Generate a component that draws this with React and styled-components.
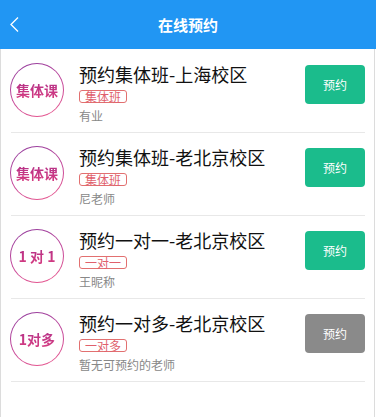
import React from "react";
import styled, { createGlobalStyle } from "styled-components";

const Global = createGlobalStyle`
  html, body { margin: 0; padding: 0; background: #fff; }
  body { font-family: "Noto Sans CJK SC", "Noto Sans", sans-serif; }
`;

const Page = styled.div`
  width: 376px;
  min-height: 417px;
  display: flex;
  flex-direction: column;
`;

const Header = styled.header`
  height: 49px;
  background: #2196f3;
  display: grid;
  grid-template-columns: 40px 1fr 40px;
  align-items: center;
`;

const Back = styled.button`
  border: 0;
  background: none;
  padding: 0 0 0 10px;
  height: 49px;
  display: flex;
  align-items: center;
`;

const Title = styled.h1`
  margin: 0;
  text-align: center;
  color: #fff;
  font-size: 15px;
  font-weight: 700;
  line-height: 20px;
`;

const List = styled.main`
  flex: 1;
  padding-top: 1px;
  border-left: 1px solid #dcdcdc;
  border-right: 1px solid #dcdcdc;
  margin-right: 1px;
  padding-right: 9px;
  padding-left: 10px;
`;

const Row = styled.div`
  height: 83px;
  box-sizing: border-box;
  border-bottom: 1px solid #e8e8e8;
  display: grid;
  grid-template-columns: 54px 1fr 60px;
  column-gap: 14px;
  align-items: start;
  padding-top: 13px;
`;

const Badge = styled.div`
  width: 54px;
  height: 54px;
  box-sizing: border-box;
  border-radius: 50%;
  border: 1px solid transparent;
  background: linear-gradient(#fff, #fff) padding-box,
    linear-gradient(160deg, #8e3c9e 0%, #c2459a 50%, #ee5a8c 100%) border-box;
  display: flex;
  align-items: center;
  justify-content: center;
  margin-left: -1px;
`;

const BadgeText = styled.span`
  font-size: 14px;
  font-weight: 700;
  background: linear-gradient(180deg, #b0308a, #d83c80);
  -webkit-background-clip: text;
  background-clip: text;
  color: transparent;
  white-space: pre;
`;

const Info = styled.div`
  display: flex;
  flex-direction: column;
  align-items: flex-start;
  min-width: 0;
`;

const Name = styled.div`
  font-size: 18px;
  line-height: 22px;
  color: #111;
  white-space: nowrap;
`;

const Tag = styled.span`
  margin-top: 5px;
  height: 13px;
  box-sizing: border-box;
  border: 1px solid #e27070;
  border-radius: 3px;
  padding: 0 5px;
  font-size: 12px;
  line-height: 11px;
  color: #e0606c;
`;

const Sub = styled.div`
  margin-top: 5px;
  font-size: 12px;
  line-height: 16px;
  color: #888;
`;

const Action = styled.button`
  margin-top: 2px;
  width: 60px;
  height: 39px;
  border: 0;
  border-radius: 4px;
  background: ${(p) => (p.$disabled ? "#8a8a8a" : "#1bbc8c")};
  color: #fff;
  font-family: inherit;
  font-size: 12px;
  padding: 0;
`;

const items = [
  { badge: "集体课", name: "预约集体班-上海校区", tag: "集体班", sub: "有业" },
  { badge: "集体课", name: "预约集体班-老北京校区", tag: "集体班", sub: "尼老师" },
  { badge: "1 对 1", name: "预约一对一-老北京校区", tag: "一对一", sub: "王昵称" },
  { badge: "1对多", name: "预约一对多-老北京校区", tag: "一对多", sub: "暂无可预约的老师", disabled: true },
];

export default function App() {
  return (
    <>
      <Global />
      <Page>
        <Header>
          <Back aria-label="返回">
            <svg width="9" height="15" viewBox="0 0 9 15">
              <polyline points="8,0.5 1,7.5 8,14.5" fill="none" stroke="#fff" strokeWidth="1.3" />
            </svg>
          </Back>
          <Title>在线预约</Title>
          <span />
        </Header>
        <List>
          {items.map((it, i) => (
            <Row key={i}>
              <Badge>
                <BadgeText>{it.badge}</BadgeText>
              </Badge>
              <Info>
                <Name>{it.name}</Name>
                <Tag>{it.tag}</Tag>
                <Sub>{it.sub}</Sub>
              </Info>
              <Action $disabled={it.disabled}>预约</Action>
            </Row>
          ))}
        </List>
      </Page>
    </>
  );
}
